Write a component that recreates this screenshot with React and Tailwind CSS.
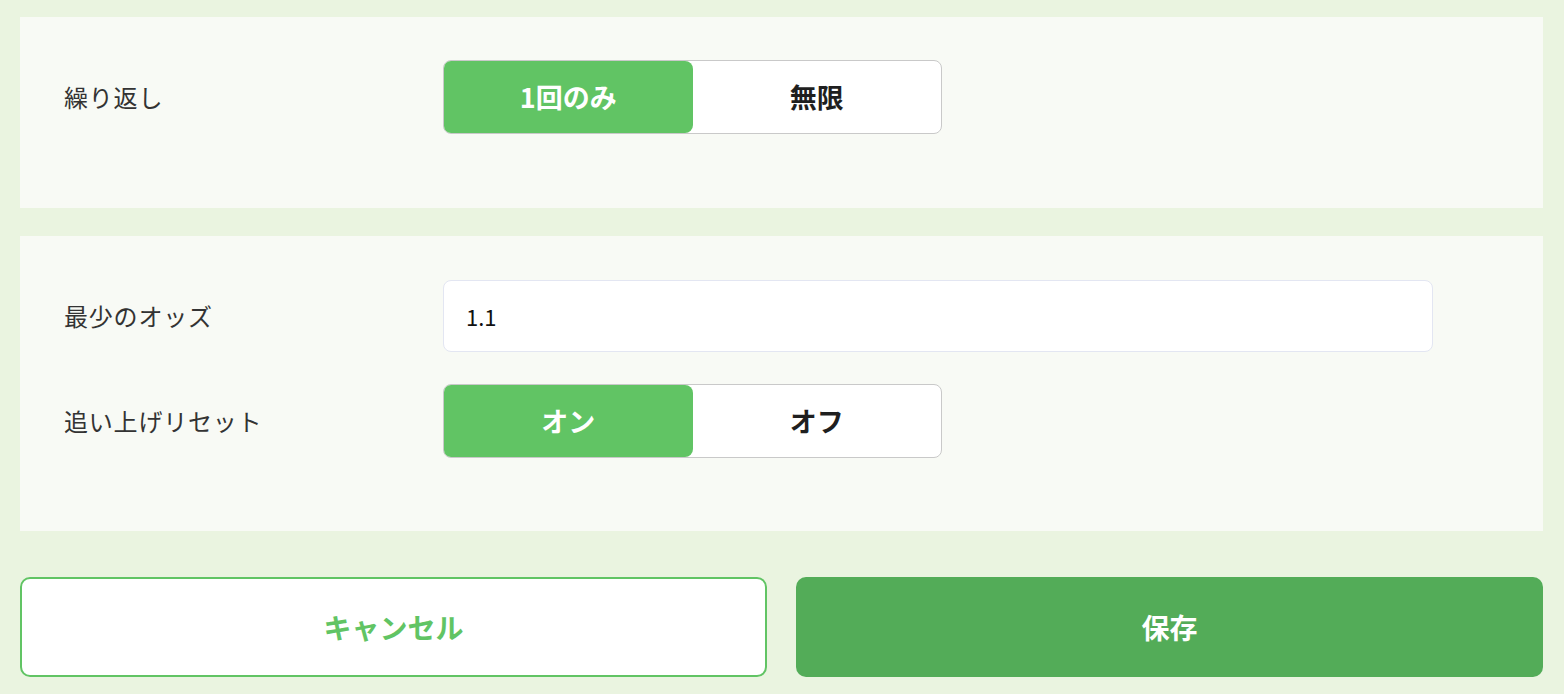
import React from "react";

const font = { fontFamily: '"Noto Sans CJK JP", "Noto Sans", sans-serif' };

function Toggle({ left, right }) {
  return (
    <div className="flex w-[499px] h-[74px] rounded-[8px] border border-[#c9c9c9] bg-white overflow-hidden">
      <div className="flex-1 flex items-center justify-center bg-[#61c464] rounded-r-[8px] text-white text-[27px] font-bold">
        {left}
      </div>
      <div className="flex-1 flex items-center justify-center text-[#1f1f1f] text-[27px] font-bold">
        {right}
      </div>
    </div>
  );
}

function Row({ label, children }) {
  return (
    <div className="flex items-center mb-[32px]">
      <div className="w-[379px] text-[24px] tracking-[0.8px] text-[#333333]">{label}</div>
      {children}
    </div>
  );
}

export default function App() {
  return (
    <div className="w-[1564px] h-[694px] bg-[#eaf4e0] pl-[20px] pt-[17px] pr-[21px]" style={font}>
      <div className="bg-[#f8faf5] pl-[44px] pt-[43px] pb-[42px]">
        <Row label="繰り返し">
          <Toggle left="1回のみ" right="無限" />
        </Row>
      </div>
      <div className="bg-[#f8faf5] pl-[44px] pt-[44px] pb-[41px] mt-[28px]">
        <Row label="最少のオッズ">
          <div className="w-[990px] h-[72px] rounded-[8px] border border-[#e3e6f2] bg-white flex items-center pl-[22px] text-[22px] text-[#111]">
            1.1
          </div>
        </Row>
        <Row label="追い上げリセット">
          <Toggle left="オン" right="オフ" />
        </Row>
      </div>
      <div className="flex gap-[29px] mt-[46px]">
        <button className="w-[747px] h-[100px] rounded-[10px] border-2 border-[#61c464] bg-white text-[#61c464] text-[28px] font-bold flex items-center justify-center">
          キャンセル
        </button>
        <button className="w-[747px] h-[100px] rounded-[10px] bg-[#53ac58] text-white text-[28px] font-bold flex items-center justify-center">
          保存
        </button>
      </div>
    </div>
  );
}
